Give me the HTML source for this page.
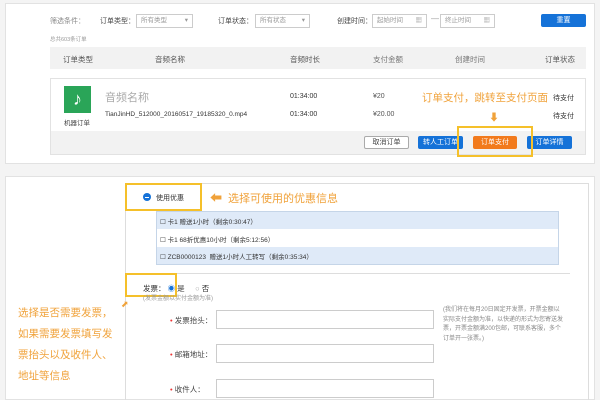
<!DOCTYPE html><html><head><meta charset="utf-8"><style>
*{margin:0;padding:0;box-sizing:border-box}
body{width:600px;height:400px;background:#f4f4f4;font-family:"Liberation Sans","Noto Sans CJK SC",sans-serif;position:relative;overflow:hidden;color:#555}
.a{position:absolute;white-space:nowrap}
.card{position:absolute;background:#fff;border:1px solid #e2e2e2}
.s{font-size:7px;color:#888}
.sel{position:absolute;border:1px solid #ccc;background:#fff;font-size:6.5px;color:#999;padding:0 4px;height:14px;line-height:12px}
.btn{position:absolute;height:13px;font-size:7px;color:#fff;text-align:center;line-height:13px;border-radius:2px}
.or{color:#f0a23a}
.yb{position:absolute;border:2px solid #f5c02a}
.inp{position:absolute;left:216px;width:218px;height:19px;border:1px solid #ccc;background:#fff}
.lab{position:absolute;font-size:7.5px;color:#444}
.lab b{color:#e33;font-weight:normal}
</style></head><body>
<div class="card" style="left:5px;top:3px;width:590px;height:161px"></div>
<div class="a s" style="left:50px;top:16px">筛选条件：</div>
<div class="a" style="left:100px;top:16px;font-size:7px;color:#444">订单类型：</div>
<div class="sel" style="left:136px;top:14px;width:57px">所有类型 <span style="float:right">▾</span></div>
<div class="a" style="left:218px;top:16px;font-size:7px;color:#444">订单状态：</div>
<div class="sel" style="left:255px;top:14px;width:55px">所有状态 <span style="float:right">▾</span></div>
<div class="a" style="left:337px;top:16px;font-size:7px;color:#444">创建时间：</div>
<div class="sel" style="left:372px;top:14px;width:55px">起始时间 <span style="float:right">▦</span></div>
<div class="a" style="left:431px;top:14px;font-size:8px;color:#999">—</div>
<div class="sel" style="left:440px;top:14px;width:55px">终止时间 <span style="float:right">▦</span></div>
<div class="btn" style="left:541px;top:14px;width:45px;background:#1572d8">重置</div>
<div class="a" style="left:50px;top:35px;font-size:5.5px;color:#999">总共603条订单</div>
<div class="a" style="left:50px;top:47px;width:536px;height:22px;background:#f2f2f2"></div>
<div class="a" style="left:63px;top:54px;font-size:7.5px;color:#555">订单类型</div>
<div class="a" style="left:155px;top:54px;font-size:7.5px;color:#555">音频名称</div>
<div class="a" style="left:290px;top:54px;font-size:7.5px;color:#555">音频时长</div>
<div class="a" style="left:373px;top:54px;font-size:7.5px;color:#777">支付金额</div>
<div class="a" style="left:455px;top:54px;font-size:7.5px;color:#777">创建时间</div>
<div class="a" style="left:545px;top:54px;font-size:7.5px;color:#555">订单状态</div>
<div class="a" style="left:50px;top:78px;width:536px;height:77px;border:1px solid #e2e2e2;background:#fff"></div>
<div class="a" style="left:51px;top:131px;width:534px;height:23px;background:#f2f2f2"></div>
<div class="a" style="left:64px;top:86px;width:27px;height:27px;background:#2aa558;color:#fff;font-size:18px;text-align:center;line-height:27px">♪</div>
<div class="a" style="left:64px;top:117px;font-size:6.5px;color:#444">机器订单</div>
<div class="a" style="left:105px;top:89px;font-size:11px;color:#aaa">音频名称</div>
<div class="a" style="left:105px;top:111px;font-size:6.5px;color:#333">TianJinHD_512000_20160517_19185320_0.mp4</div>
<div class="a" style="left:290px;top:93px;font-size:7px;color:#333">01:34:00</div>
<div class="a" style="left:290px;top:111px;font-size:7px;color:#333">01:34:00</div>
<div class="a" style="left:373px;top:93px;font-size:7px;color:#555">¥20</div>
<div class="a" style="left:373px;top:111px;font-size:7px;color:#555">¥20.00</div>
<div class="a" style="left:553px;top:93px;font-size:7px;color:#333">待支付</div>
<div class="a" style="left:553px;top:111px;font-size:7px;color:#333">待支付</div>
<div class="a or" style="left:422px;top:90px;font-size:10.5px;background:rgba(255,255,255,.8)">订单支付，跳转至支付页面</div>
<div class="a" style="left:489px;top:109px;font-size:10px;color:#f0a23a">⬇</div>
<div class="btn" style="left:364px;top:136px;width:45px;background:#fff;border:1px solid #aaa;color:#444;line-height:11px">取消订单</div>
<div class="btn" style="left:418px;top:136px;width:45px;background:#1572d8">转人工订单</div>
<div class="btn" style="left:473px;top:136px;width:44px;background:#f27a1c">订单支付</div>
<div class="btn" style="left:527px;top:136px;width:45px;background:#1572d8">订单详情</div>
<div class="yb" style="left:457px;top:126px;width:76px;height:31px"></div>

<div class="card" style="left:5px;top:176px;width:590px;height:224px"></div>
<div class="a" style="left:125px;top:183px;width:464px;height:217px;border:1px solid #ddd;border-bottom:none"></div>
<div class="yb" style="left:125px;top:183px;width:77px;height:28px"></div>
<div class="a" style="left:143px;top:193px;width:8px;height:8px;border-radius:50%;background:#1572d8"><div style="position:absolute;left:2px;top:3.5px;width:4px;height:1px;background:#fff"></div></div>
<div class="a" style="left:156px;top:193px;font-size:7px;color:#333">使用优惠</div>
<div class="a or" style="left:210px;top:189px;font-size:12px">⬅</div>
<div class="a or" style="left:228px;top:190px;font-size:11px">选择可使用的优惠信息</div>
<div class="a" style="left:156px;top:211px;width:403px;height:54px;border:1px solid #c5d5e8;background:#fff"></div>
<div class="a" style="left:157px;top:212px;width:401px;height:17px;background:#dfeaf8"></div>
<div class="a" style="left:157px;top:247px;width:401px;height:17px;background:#dfeaf8"></div>
<div class="a" style="left:160px;top:216px;font-size:6.5px;color:#333">☐ 卡1 赠送1小时（剩余0:30:47）</div>
<div class="a" style="left:160px;top:234px;font-size:6.5px;color:#333">☐ 卡1 68折优惠10小时（剩余5:12:56）</div>
<div class="a" style="left:160px;top:251px;font-size:6.5px;color:#333">☐ ZCB0000123 &nbsp;赠送1小时人工转写（剩余0:35:34）</div>
<div class="a" style="left:126px;top:273px;width:444px;height:1px;background:#ddd"></div>
<div class="yb" style="left:125px;top:273px;width:52px;height:24px"></div>
<div class="a" style="left:143px;top:283px;font-size:7.5px;color:#333">发票： <span style="color:#1572d8">◉</span> 是 &nbsp;&nbsp;&nbsp; <span style="color:#aaa">○</span> 否</div>
<div class="a" style="left:143px;top:293px;font-size:6px;color:#999">(发票金额以实付金额为准)</div>
<div class="a or" style="left:121px;top:299px;font-size:9px">⬈</div>
<div class="a or" style="left:18px;top:303px;font-size:10.5px;line-height:21px">选择是否需要发票，<br>如果需要发票填写发<br>票抬头以及收件人、<br>地址等信息</div>
<div class="lab" style="left:170px;top:315px"><b>•</b> 发票抬头：</div>
<div class="inp" style="top:310px"></div>
<div class="lab" style="left:170px;top:349px"><b>•</b> 邮箱地址：</div>
<div class="inp" style="top:344px"></div>
<div class="lab" style="left:170px;top:384px"><b>•</b> 收件人：</div>
<div class="inp" style="top:379px"></div>
<div class="a" style="left:443px;top:306px;width:120px;white-space:normal;font-size:6px;line-height:9.5px;color:#888">(我们将在每月20日固定开发票，开票金额以实际支付金额为准，以快递的形式为您寄送发票，开票金额满200包邮，可联系客服，多个订单开一张票。)</div>
</body></html>
